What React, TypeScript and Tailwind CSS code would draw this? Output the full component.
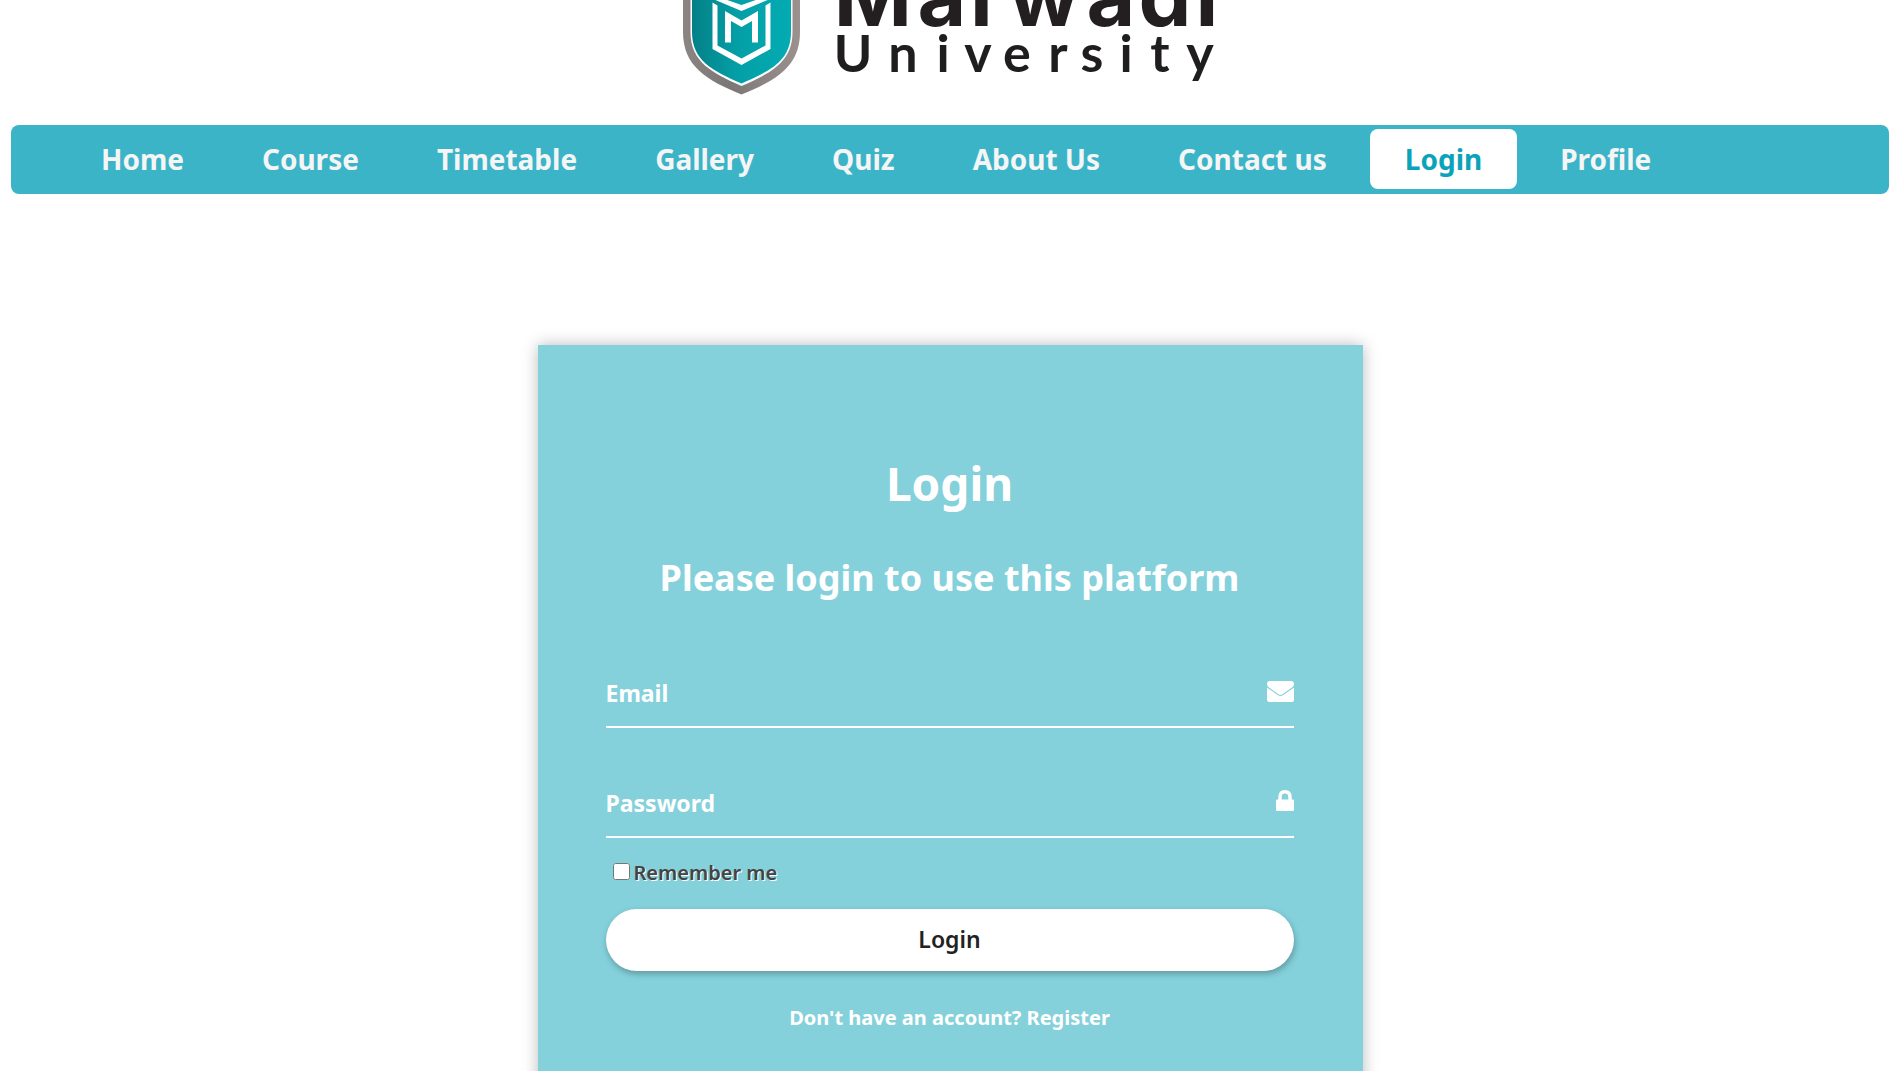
const nav = ["Home", "Course", "Timetable", "Gallery", "Quiz", "About Us", "Contact us", "Login", "Profile"];

function Logo() {
  return (
    <svg viewBox="650 -60 600 160" className="-mt-[60px] block h-40 w-[600px]" role="img" aria-label="Marwadi University">
      <defs>
        <linearGradient id="teal" x1="0" y1="0" x2="1" y2="0">
          <stop offset="0" stopColor="#048087" />
          <stop offset=".45" stopColor="#049fa6" />
          <stop offset="1" stopColor="#03abb3" />
        </linearGradient>
        <linearGradient id="rim" x1="0" y1="0" x2="1" y2="0">
          <stop offset="0" stopColor="#8b8583" />
          <stop offset=".4" stopColor="#7b7776" />
          <stop offset="1" stopColor="#9b918f" />
        </linearGradient>
      </defs>
      <path d="M683-50V32C683 66 706 80 741.5 94.5C777 80 800 66 800 32V-50Z" fill="url(#rim)" />
      <path d="M690.5-50V32C690.5 62 712 73 741.5 86C771 73 792.5 62 792.5 32V-50Z" fill="#fff" />
      <path d="M692-50V32C692 61 713 71 741.5 83.5C770 71 791 61 791 32V-50Z" fill="url(#teal)" />
      <g fill="#fff">
        <path d="M712.5 2.5L717.5 5.5V45.5L741.5 58.5L765.5 45.5V5.5L770.5 2.5V49L741.5 65L712.5 49Z" />
        <path d="M725 11L741.5 20.5L758 11V42.5H752V21L741.5 27L731 21V42.5H725Z" />
        <path d="M713-5L741.5 5L770-5V-1L741.5 11L713-1Z" />
      </g>
      <text
        x="873 942 987 1044 1111 1165 1207"
        y="26"
        textAnchor="middle"
        fontSize="84"
        fontWeight="700"
        fill="#231f20"
        className="font-['Inter',sans-serif]"
      >
        Marwadi
      </text>
      <text
        x="853 903 943 978 1017 1058 1092 1126 1160 1200"
        y="72"
        textAnchor="middle"
        fontSize="52"
        fontWeight="700"
        fill="#1f1d1e"
        className="font-['Lato',sans-serif]"
      >
        University
      </text>
    </svg>
  );
}

function MailIcon() {
  return (
    <svg viewBox="0 0 27 21" className="mt-[21px] h-[21px] w-[27px] shrink-0" aria-hidden="true">
      <path fill="#fff" d="M3 0H24Q27 0 27 3Q27 5 25 6.5L15.5 13.2Q13.5 14.5 11.5 13.2L2 6.5Q0 5 0 3Q0 0 3 0Z" />
      <path fill="#fff" d="M0 6.5L11 14.2Q13.5 15.8 16 14.2L27 6.5V18.5Q27 21 24.5 21H2.5Q0 21 0 18.5Z" />
    </svg>
  );
}

function LockIcon() {
  return (
    <svg viewBox="0 0 18 21" className="mt-5 h-[21px] w-[18px] shrink-0" aria-hidden="true">
      <path d="M4 11V7Q4 1.7 9 1.7Q14 1.7 14 7V11" fill="none" stroke="#fff" strokeWidth="3.4" />
      <rect y="9.5" width="18" height="11.5" rx="1.2" fill="#fff" />
    </svg>
  );
}

const row = "relative flex h-[68px] border-b-2 border-white";
const field = "peer h-full min-w-0 flex-1 bg-transparent text-[23px] font-bold text-white outline-none";
const fieldLabel =
  "pointer-events-none absolute inset-y-0 left-0 flex items-center text-[23px] leading-8 peer-focus:hidden peer-[:not(:placeholder-shown)]:hidden";

export default function App() {
  return (
    <div className="h-screen overflow-hidden bg-white pr-px pl-[11px] font-['Noto_Sans',sans-serif]">
      <header className="flex h-[125px] justify-center">
        <Logo />
      </header>
      <nav className="rounded-lg bg-[#3bb4c8] pt-1 pb-[5px] pl-[55px]">
        <ul className="flex gap-2">
          {nav.map((name) => (
            <li key={name}>
              <a
                href="#"
                aria-current={name === "Login" ? "page" : undefined}
                className={
                  name === "Login"
                    ? "block rounded-lg bg-white px-[35px] text-[28px] leading-[60px] font-bold text-[#0ba3ba]"
                    : "block px-[35px] text-[28px] leading-[60px] font-bold text-[#f5f5f5]"
                }
              >
                {name}
              </a>
            </li>
          ))}
        </ul>
      </nav>
      <main className="mx-auto mt-[151px] w-full max-w-[825px] bg-[#84d1db] pt-[106px] pr-[69px] pb-24 pl-[68px] text-center font-bold text-white shadow-[0_0_15px_rgba(0,0,0,0.27)]">
        <h1 className="text-[46px] leading-[64px]">Login</h1>
        <h2 className="mt-[39px] text-[36px] leading-[48px]">Please login to use this platform</h2>
        <form className="mt-[58px]">
          <div className={row}>
            <input id="email" type="email" placeholder=" " className={field} />
            <label htmlFor="email" className={fieldLabel}>Email</label>
            <MailIcon />
          </div>
          <div className="mt-[42px]">
            <div className={row}>
              <input id="password" type="password" placeholder=" " className={field} />
              <label htmlFor="password" className={fieldLabel}>Password</label>
              <LockIcon />
            </div>
          </div>
          <div className="mt-5 flex items-center gap-1 pl-[7px]">
            <input id="remember" type="checkbox" className="mb-1 h-[17px] w-[17px]" />
            <label htmlFor="remember" className="text-[20px] leading-[30px] font-semibold text-[#444] [text-shadow:1px_1px_0_#fff]">
              Remember me
            </label>
          </div>
          <button
            type="button"
            className="mt-[21px] block h-[62px] w-full rounded-full bg-white pb-0.5 text-[23px] font-semibold text-[#222] shadow-[1px_3px_6px_rgba(0,0,0,0.27)]"
          >
            Login
          </button>
          <p className="mt-8 text-[20px] leading-[30px]">
            Don't have an account? <a href="#">Register</a>
          </p>
        </form>
      </main>
    </div>
  );
}
